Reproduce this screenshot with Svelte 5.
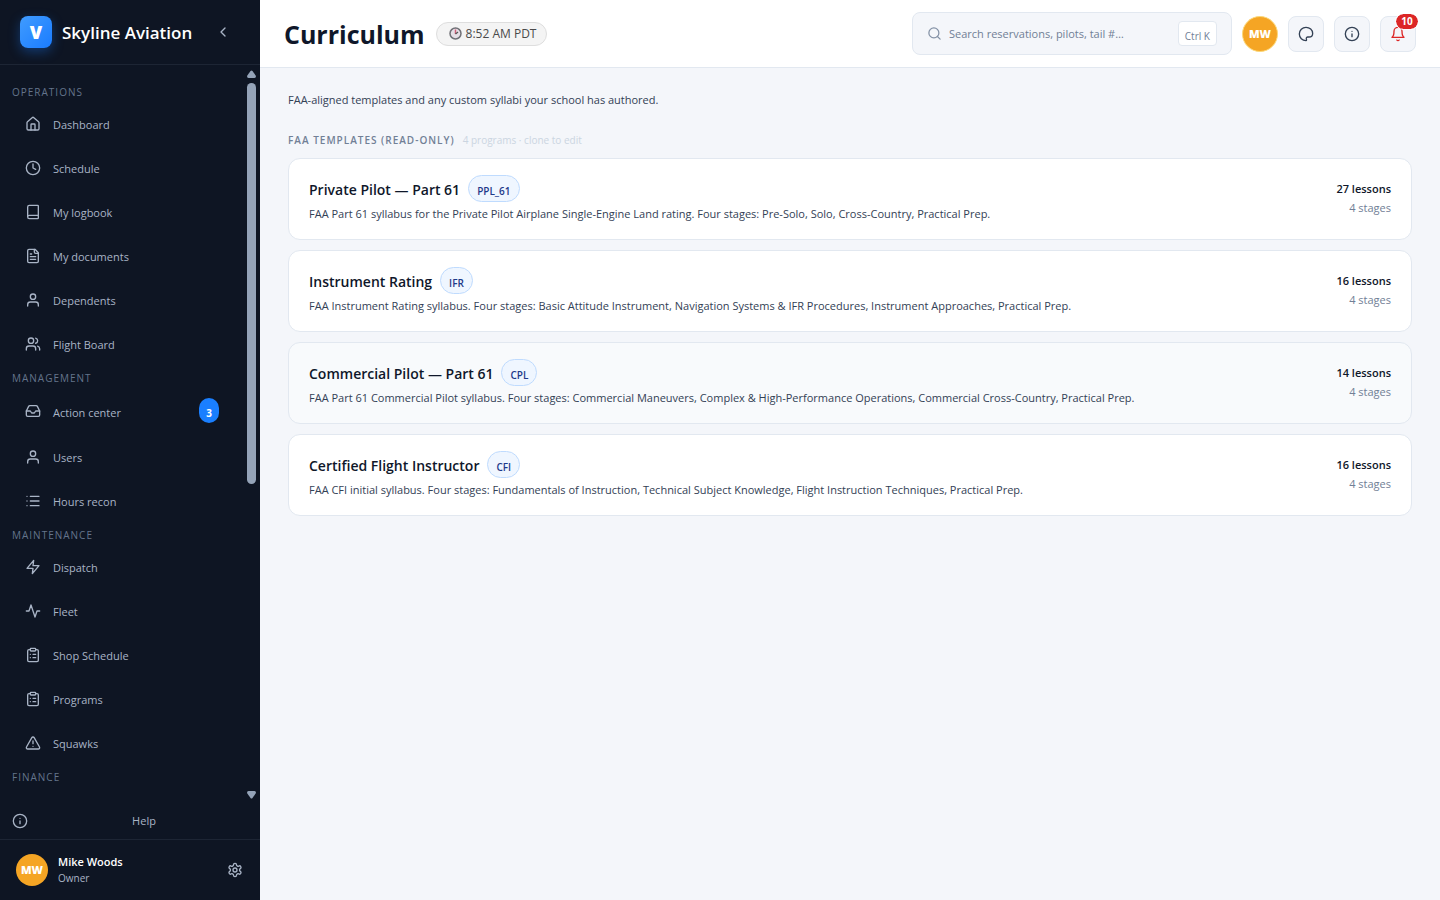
<script>
  const icons = {
    home: '<path d="M15 21v-8a1 1 0 0 0-1-1h-4a1 1 0 0 0-1 1v8"/><path d="M3 10a2 2 0 0 1 .7-1.5l7-6a2 2 0 0 1 2.6 0l7 6A2 2 0 0 1 21 10v9a2 2 0 0 1-2 2H5a2 2 0 0 1-2-2z"/>',
    clock: '<circle cx="12" cy="12" r="10"/><path d="M12 6v6l4 2"/>',
    book: '<path d="M4 19.5v-15A2.5 2.5 0 0 1 6.500 2H19a1 1 0 0 1 1 1v18a1 1 0 0 1-1 1H6.500a2.500 2.500 0 0 1 0-5H20"/>',
    file: '<path d="M15 2H6a2 2 0 0 0-2 2v16a2 2 0 0 0 2 2h12a2 2 0 0 0 2-2V7z"/><path d="M14 2v4a2 2 0 0 0 2 2h4M10 9H8M16 13H8M16 17H8"/>',
    user: '<path d="M20 21v-2a4 4 0 0 0-4-4H8a4 4 0 0 0-4 4v2"/><circle cx="12" cy="7" r="4"/>',
    users: '<path d="M16 21v-2a4 4 0 0 0-4-4H6a4 4 0 0 0-4 4v2"/><circle cx="9" cy="7" r="4"/><path d="M22 21v-2a4 4 0 0 0-3-3.870M16 3.130a4 4 0 0 1 0 7.750"/>',
    inbox: '<path d="M22 12h-6l-2 3h-4l-2-3H2"/><path d="M5.450 5.110 2 12v6a2 2 0 0 0 2 2h16a2 2 0 0 0 2-2v-6l-3.450-6.890A2 2 0 0 0 16.760 4H7.240a2 2 0 0 0-1.790 1.110z"/>',
    list: '<path d="M8 5h13M8 12h13M8 19h13M3 5h.01M3 12h.01M3 19h.01"/>',
    zap: '<path d="M13 2 3 14h9l-1 8 10-12h-9z"/>',
    activity: '<path d="M22 12h-4l-3 9L9 3l-3 9H2"/>',
    clipboard: '<rect x="8" y="2" width="8" height="4" rx="1"/><path d="M16 4h2a2 2 0 0 1 2 2v14a2 2 0 0 1-2 2H6a2 2 0 0 1-2-2V6a2 2 0 0 1 2-2h2M12 11h4M12 16h4M8 11h.01M8 16h.01"/>',
    alert: '<path d="m21.730 18-8-14a2 2 0 0 0-3.480 0l-8 14A2 2 0 0 0 4 21h16a2 2 0 0 0 1.730-3z"/><path d="M12 9v4M12 17h.01"/>',
    info: '<circle cx="12" cy="12" r="10"/><path d="M12 16v-4M12 8h.01"/>',
    gear: '<path d="M12.220 2h-.44a2 2 0 0 0-2 2v.18a2 2 0 0 1-1 1.730l-.43.25a2 2 0 0 1-2 0l-.15-.08a2 2 0 0 0-2.730.73l-.22.38a2 2 0 0 0 .73 2.730l.15.1a2 2 0 0 1 1 1.720v.51a2 2 0 0 1-1 1.740l-.15.09a2 2 0 0 0-.73 2.730l.22.38a2 2 0 0 0 2.730.73l.15-.08a2 2 0 0 1 2 0l.43.25a2 2 0 0 1 1 1.730V20a2 2 0 0 0 2 2h.44a2 2 0 0 0 2-2v-.18a2 2 0 0 1 1-1.730l.43-.25a2 2 0 0 1 2 0l.15.08a2 2 0 0 0 2.730-.73l.22-.39a2 2 0 0 0-.73-2.730l-.15-.08a2 2 0 0 1-1-1.740v-.5a2 2 0 0 1 1-1.740l.15-.09a2 2 0 0 0 .73-2.730l-.22-.38a2 2 0 0 0-2.730-.73l-.15.08a2 2 0 0 1-2 0l-.43-.25a2 2 0 0 1-1-1.730V4a2 2 0 0 0-2-2z"/><circle cx="12" cy="12" r="3"/>',
    search: '<circle cx="11" cy="11" r="8"/><path d="m21 21-4.300-4.300"/>',
    chevron: '<path d="m15 18-6-6 6-6"/>',
    palette: '<path d="M12 22C6.500 22 2 17.500 2 12S6.500 2 12 2s10 4 10 9.200c0 3.200-2.500 5.300-5.500 5.300h-1.800c-1.700 0-2.700 1.300-2.200 2.800.4 1.200.6 2.700-.5 2.700z"/>',
    bell: '<path d="M18 8A6 6 0 0 0 6 8c0 7-3 9-3 9h18s-3-2-3-9M13.730 21a2 2 0 0 1-3.460 0"/>'
  };

  const sections = [
    { title: 'Operations', items: [['Dashboard', 'home'], ['Schedule', 'clock'], ['My logbook', 'book'], ['My documents', 'file'], ['Dependents', 'user'], ['Flight Board', 'users']] },
    { title: 'Management', items: [['Action center', 'inbox', 3], ['Users', 'user'], ['Hours recon', 'list']] },
    { title: 'Maintenance', items: [['Dispatch', 'zap'], ['Fleet', 'activity'], ['Shop Schedule', 'clipboard'], ['Programs', 'clipboard'], ['Squawks', 'alert']] },
    { title: 'Finance', items: [] }
  ];

  const programs = [
    { name: 'Private Pilot — Part 61', code: 'PPL_61', lessons: 27, text: 'FAA Part 61 syllabus for the Private Pilot Airplane Single-Engine Land rating. Four stages: Pre-Solo, Solo, Cross-Country, Practical Prep.' },
    { name: 'Instrument Rating', code: 'IFR', lessons: 16, text: 'FAA Instrument Rating syllabus. Four stages: Basic Attitude Instrument, Navigation Systems & IFR Procedures, Instrument Approaches, Practical Prep.' },
    { name: 'Commercial Pilot — Part 61', code: 'CPL', lessons: 14, active: true, text: 'FAA Part 61 Commercial Pilot syllabus. Four stages: Commercial Maneuvers, Complex & High-Performance Operations, Commercial Cross-Country, Practical Prep.' },
    { name: 'Certified Flight Instructor', code: 'CFI', lessons: 16, text: 'FAA CFI initial syllabus. Four stages: Fundamentals of Instruction, Technical Subject Knowledge, Flight Instruction Techniques, Practical Prep.' }
  ];
</script>

{#snippet icon(name, size)}
  <svg class="icon" width={size} height={size} viewBox="0 0 24 24" aria-hidden="true">{@html icons[name]}</svg>
{/snippet}

<div class="shell">
  <aside>
    <div class="brand">
      <span class="logo">V</span>
      <strong>Skyline Aviation</strong>
      <button class="collapse" aria-label="Collapse sidebar">{@render icon('chevron', 16)}</button>
    </div>

    <div class="scroller">
      <nav>
        {#each sections as section}
          <h2>{section.title}</h2>
          {#each section.items as [label, name, count]}
            <a href="#top" class:counted={count}>
              {@render icon(name, 16)}
              <span class="label">{label}</span>
              {#if count}<span class="count">{count}</span>{/if}
            </a>
          {/each}
        {/each}
      </nav>
      <div class="track" aria-hidden="true">
        <svg width="9" height="8" viewBox="0 0 9 8"><path d="M3.500 1Q4.500 0 5.500 1L9 6Q9 8 7.500 8H1.500Q0 8 0 6Z" /></svg>
        <div class="rail"><div class="thumb"></div></div>
        <svg width="9" height="8" viewBox="0 0 9 8"><path d="M3.500 7Q4.500 8 5.500 7L9 2Q9 0 7.500 0H1.500Q0 0 0 2Z" /></svg>
      </div>
    </div>

    <button class="help">{@render icon('info', 16)}<span>Help</span></button>

    <div class="account">
      <span class="avatar">MW</span>
      <div class="who"><b>Mike Woods</b><span>Owner</span></div>
      <button class="settings" aria-label="Settings">{@render icon('gear', 16)}</button>
    </div>
  </aside>

  <div class="page">
    <header>
      <h1>Curriculum</h1>
      <div class="time">
        <svg width="13" height="13" viewBox="0 0 26 26" aria-hidden="true">
          <circle cx="13" cy="13" r="11" fill="#e6dfe6" stroke="#707076" stroke-width="3" />
          <path d="M13 14V5" stroke="#d0607a" stroke-width="3" />
          <path d="m13 14 5-4" stroke="#555" stroke-width="2.500" />
        </svg>
        <span>8:52 AM PDT</span>
      </div>
      <div class="tools">
        <label class="search">
          {@render icon('search', 15)}
          <input type="text" aria-label="Search" placeholder="Search reservations, pilots, tail #…" />
          <kbd>Ctrl K</kbd>
        </label>
        <button class="avatar ringed" aria-label="Account">MW</button>
        <button class="tool" aria-label="Theme">{@render icon('palette', 16)}</button>
        <button class="tool" aria-label="Information">{@render icon('info', 16)}</button>
        <button class="tool alert" aria-label="Notifications">{@render icon('bell', 16)}<span class="bubble">10</span></button>
      </div>
    </header>

    <main>
      <p class="intro">FAA-aligned templates and any custom syllabi your school has authored.</p>
      <div class="heading">
        <h2>FAA Templates (read-only)</h2>
        <span>4 programs · clone to edit</span>
      </div>
      <div class="cards">
        {#each programs as p}
          <article class:active={p.active}>
            <div class="info">
              <div class="title"><h3>{p.name}</h3><span class="code">{p.code}</span></div>
              <p>{p.text}</p>
            </div>
            <div class="totals"><b>{p.lessons} lessons</b><span>4 stages</span></div>
          </article>
        {/each}
      </div>
    </main>
  </div>
</div>

<style>
  :global(body) { background: #f4f6fa; }
  .shell {
    display: flex;
    height: 100vh;
    font-family: "Open Sans", "Noto Sans", sans-serif;
    font-size: 11px;
    line-height: 20px;
    color: #0f172a;
  }
  * { box-sizing: border-box; }
  h1, h2, h3, p { margin: 0; }
  button { font: inherit; color: inherit; padding: 0; border: 0; background: none; cursor: pointer; }
  .icon {
    flex: none;
    fill: none;
    stroke: currentColor;
    stroke-width: 2;
    stroke-linecap: round;
    stroke-linejoin: round;
  }

  aside {
    flex: none;
    width: 260px;
    display: flex;
    flex-direction: column;
    background: #0e1523;
    color: #a9b4c6;
  }
  .brand {
    display: flex;
    align-items: center;
    gap: 10px;
    height: 65px;
    padding: 0 29px 0 20px;
    border-bottom: 1px solid #1d2534;
  }
  .logo {
    width: 32px;
    height: 32px;
    border-radius: 8px;
    background: linear-gradient(135deg, #409cff, #1a7cff);
    box-shadow: 0 4px 12px rgba(26, 127, 255, 0.35);
    color: #fff;
    font-size: 18px;
    font-weight: 800;
    line-height: 32px;
    text-align: center;
  }
  .brand strong { color: #fff; font-size: 17px; font-weight: 600; line-height: 24px; padding-top: 2px; white-space: nowrap; }
  .collapse { display: flex; margin-left: auto; }
  .scroller { flex: 1; min-height: 0; display: flex; }
  nav { flex: 1; padding: 16px 0 0 12px; overflow: hidden; }
  nav h2 {
    color: #64748b;
    font-size: 10px;
    font-weight: 500;
    line-height: 22px;
    letter-spacing: 1px;
    text-transform: uppercase;
  }
  nav a {
    display: flex;
    align-items: center;
    gap: 12px;
    height: 44px;
    padding: 0 28px 0 13px;
    color: inherit;
    font-weight: 500;
    text-decoration: none;
  }
  nav a.counted { height: 47px; }
  nav .icon { margin-bottom: 3px; }
  .count {
    width: 20px;
    height: 25px;
    margin-left: auto;
    margin-bottom: 4px;
    padding-top: 3px;
    border-radius: 10px;
    background: #1a7fff;
    color: #fff;
    font-size: 10px;
    font-weight: 700;
    line-height: 24px;
    text-align: center;
  }
  .track { display: flex; flex-direction: column; gap: 5px; width: 13px; padding: 5px 4px 0 0; }
  .track svg { flex: none; fill: #94a3b8; }
  .rail { flex: 1; }
  .thumb { height: 57%; border-radius: 5px; background: #94a3b8; }
  .help {
    display: flex;
    align-items: center;
    height: 40px;
    padding: 4px 0 0 12px;
    font-weight: 500;
  }
  .help span { flex: 1; }
  .account {
    display: flex;
    align-items: center;
    gap: 10px;
    height: 61px;
    padding: 0 17px 0 16px;
    border-top: 1px solid #1d2534;
  }
  .avatar {
    flex: none;
    width: 32px;
    height: 32px;
    border-radius: 50%;
    background: #f5a524;
    color: #fff;
    font-weight: 800;
    line-height: 32px;
    text-align: center;
  }
  .who { display: flex; flex-direction: column; line-height: 16px; }
  .who b { color: #fff; font-weight: 600; }
  .who span { font-size: 10px; }
  .settings { display: flex; margin-left: auto; }

  .page { flex: 1; min-width: 0; }
  header {
    display: flex;
    align-items: center;
    gap: 11px;
    height: 68px;
    padding: 0 24px;
    border-bottom: 1px solid #e2e8f0;
    background: #fff;
  }
  h1 { font-size: 25px; font-weight: 700; line-height: 36px; }
  .time {
    display: flex;
    align-items: center;
    gap: 4px;
    height: 24px;
    padding: 0 10px 0 12px;
    border: 1px solid #dedede;
    border-radius: 12px;
    background: #f4f4f4;
    color: #4a4a4a;
    font-size: 12px;
    white-space: nowrap;
  }
  .tools { display: flex; align-items: center; gap: 10px; margin-left: auto; }
  .search {
    display: flex;
    align-items: center;
    gap: 7px;
    width: 320px;
    height: 43px;
    padding: 0 14px;
    border: 1px solid #e2e8f0;
    border-radius: 8px;
    background: #f4f6fa;
    color: #8492a6;
  }
  .search input {
    flex: 1;
    min-width: 0;
    padding: 0;
    border: 0;
    outline: 0;
    background: none;
    font: inherit;
    color: #0f172a;
  }
  .search input::placeholder { color: #718096; opacity: 1; }
  kbd {
    height: 25px;
    padding: 3px 6px 0;
    border: 1px solid #e2e8f0;
    border-radius: 4px;
    background: #fff;
    color: #718096;
    font-family: inherit;
    font-size: 10px;
    line-height: 22px;
  }
  .ringed { width: 36px; height: 36px; border: 1px solid #fcd97a; }
  .tool {
    position: relative;
    display: grid;
    place-items: center;
    width: 36px;
    height: 36px;
    border: 1px solid #e2e8f0;
    border-radius: 8px;
    background: #f4f6fa;
    color: #334155;
  }
  .tool.alert { color: #dc2626; }
  .bubble {
    position: absolute;
    top: -4px;
    right: -4px;
    width: 24px;
    height: 17px;
    border: 1px solid #fff;
    border-radius: 9px;
    background: #dc2626;
    background-clip: padding-box;
    color: #fff;
    font-size: 10px;
    font-weight: 700;
    line-height: 15px;
    text-align: center;
  }

  main { padding: 22px 28px; }
  .intro { color: #334155; font-weight: 500; }
  .heading { display: flex; align-items: center; gap: 8px; margin: 20px 0 8px; }
  .heading h2 {
    color: #718096;
    font-size: 10px;
    font-weight: 600;
    line-height: 20px;
    letter-spacing: 1px;
    text-transform: uppercase;
  }
  .heading span { color: #cbd5e1; font-size: 10px; font-weight: 500; }
  .cards { display: flex; flex-direction: column; gap: 10px; }
  article {
    display: flex;
    justify-content: space-between;
    gap: 20px;
    padding: 16px 20px;
    border: 1px solid #e2e8f0;
    border-radius: 12px;
    background: #fff;
  }
  article.active { background: #f8fafc; }
  .title { display: flex; align-items: flex-start; gap: 8px; }
  h3 { padding-top: 1px; font-size: 14px; font-weight: 600; line-height: 28px; }
  .code {
    height: 27px;
    padding: 3px 8px 0;
    border: 1px solid #bfdbfe;
    border-radius: 14px;
    background: #eff6ff;
    color: #1e3a8a;
    font-size: 10px;
    font-weight: 600;
    line-height: 24px;
  }
  .info p { color: #334155; font-weight: 500; line-height: 19px; }
  .totals { display: flex; flex-direction: column; padding-top: 4px; line-height: 19px; text-align: right; white-space: nowrap; }
  .totals b { font-weight: 600; }
  .totals span { color: #718096; }
</style>
